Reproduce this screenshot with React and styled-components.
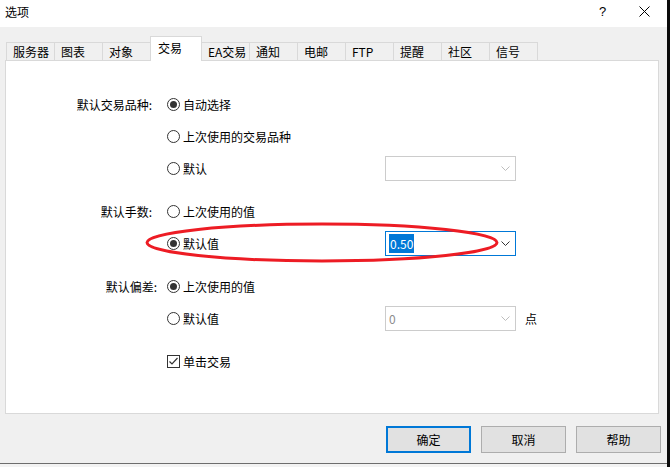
import React from "react";
import styled, { createGlobalStyle } from "styled-components";

const GlobalStyle = createGlobalStyle`
  html, body {
    margin: 0;
    padding: 0;
    background: #0b0b0b;
  }
  body {
    font-family: "Noto Sans CJK SC", "Noto Sans", sans-serif;
    font-size: 12px;
    color: #000;
  }
`;

const Screen = styled.div`
  display: flex;
  width: 670px;
  height: 467px;
  overflow: hidden;
`;

const Column = styled.div`
  display: flex;
  flex-direction: column;
  width: 667px;
`;

const Window = styled.div`
  height: 464px;
  box-sizing: border-box;
  background: #f0f0f0;
  border-bottom: 1px solid #6d6d6d;
  display: flex;
  flex-direction: column;
`;

const BelowStrip = styled.div`
  flex: 1;
  background: #f3f3f3;
`;

const TitleBar = styled.div`
  height: 27px;
  box-sizing: border-box;
  background: #fff;
  display: flex;
  align-items: flex-start;
  padding: 4px 17px 0 5px;
`;

const Title = styled.div`
  flex: 1;
  line-height: 16px;
`;

const HelpMark = styled.div`
  width: 10px;
  line-height: 16px;
  font-size: 13px;
  font-family: "Liberation Sans", sans-serif;
  margin-right: 30px;
`;

const CloseIcon = styled.svg`
  margin-top: 2px;
`;

const Body = styled.div`
  display: flex;
  flex-direction: column;
  padding: 9px 0 0 5px;
`;

const TabStrip = styled.div`
  display: flex;
  align-items: flex-end;
  height: 24px;
  margin-left: 1px;
  position: relative;
  z-index: 1;
`;

const Tab = styled.div`
  box-sizing: border-box;
  width: ${(p) => (p.$active ? "52px" : "49px")};
  height: ${(p) => (p.$active ? "25px" : "18px")};
  margin-bottom: ${(p) => (p.$active ? "-1px" : "0")};
  padding: ${(p) => (p.$active ? "2px 0 0 7px" : "0 0 0 6px")};
  line-height: 17px;
  background: ${(p) => (p.$active ? "#fff" : "#f0f0f0")};
  border: 1px solid #d9d9d9;
  border-bottom: none;
  margin-right: -1px;
  white-space: nowrap;
`;

const Panel = styled.div`
  position: relative;
  box-sizing: border-box;
  height: 354px;
  margin-right: 8px;
  background: #fff;
  border: 1px solid #d9d9d9;
  padding-top: 27px;
  display: flex;
  flex-direction: column;
  gap: 11px;
`;

const Group = styled.div`
  display: flex;
  flex-direction: column;
`;

const Row = styled.div`
  display: flex;
  align-items: center;
  height: 32px;
`;

const Label = styled.div`
  box-sizing: border-box;
  width: 161px;
  padding-right: ${(p) => 15 - (p.$shift || 0)}px;
  text-align: right;
  white-space: nowrap;
`;

const Choice = styled.label`
  display: flex;
  align-items: center;
  gap: 3px;
  width: 218px;
  white-space: nowrap;
`;

const RadioMark = styled.span`
  box-sizing: border-box;
  width: 13px;
  height: 13px;
  border-radius: 50%;
  border: 1px solid #333;
  background: #fff;
  display: flex;
  align-items: center;
  justify-content: center;

  &::after {
    content: "";
    width: 7px;
    height: 7px;
    border-radius: 50%;
    background: ${(p) => (p.$checked ? "#333" : "transparent")};
  }
`;

const CheckMark = styled.span`
  box-sizing: border-box;
  width: 13px;
  height: 13px;
  border: 1px solid #333;
  background: #fff;
  display: flex;
`;

const Combo = styled.div`
  box-sizing: border-box;
  width: 131px;
  height: 25px;
  display: flex;
  align-items: center;
  padding: 0 5px 0 3px;
  background: #fff;
  border: 1px solid ${(p) => (p.$focused ? "#0078d7" : "#cccccc")};
  color: ${(p) => (p.$disabled ? "#8c8c8c" : "#000")};
`;

const ComboValue = styled.div`
  flex: 1;
  line-height: 19px;
  display: flex;
`;

const Selected = styled.span`
  background: #0078d7;
  color: #fff;
  padding: 0 1px;
`;

const Unit = styled.span`
  margin-left: 9px;
`;

const Highlight = styled.svg`
  position: absolute;
  left: 137px;
  top: 160px;
  pointer-events: none;
`;

const Footer = styled.div`
  display: flex;
  justify-content: flex-end;
  gap: 10px;
  padding: 12px 6px 0 0;
`;

const Button = styled.button`
  box-sizing: border-box;
  width: 85px;
  height: 27px;
  padding: 0;
  font: inherit;
  color: #000;
  background: #e1e1e1;
  border: ${(p) => (p.$primary ? "2px solid #0078d7" : "1px solid #adadad")};
`;

const Sliver = styled.div`
  flex: 1;
  background: #0b0b0b;
`;

const tabs = ["服务器", "图表", "对象", "交易", "EA交易", "通知", "电邮", "FTP", "提醒", "社区", "信号"];

const Chevron = ({ color }) => (
  <svg width="9" height="5" viewBox="0 0 9 5">
    <path d="M0.5 0.5 L4.5 4.5 L8.5 0.5" fill="none" stroke={color} strokeWidth="1" />
  </svg>
);

const Radio = ({ checked, children }) => (
  <Choice>
    <RadioMark $checked={checked} />
    {children}
  </Choice>
);

export default function App() {
  return (
    <Screen>
      <GlobalStyle />
      <Column>
        <Window>
          <TitleBar>
            <Title>选项</Title>
            <HelpMark>?</HelpMark>
            <CloseIcon width="11" height="11" viewBox="0 0 11 11">
              <path d="M0.5 0.5 L10.5 10.5 M10.5 0.5 L0.5 10.5" stroke="#000" strokeWidth="1" />
            </CloseIcon>
          </TitleBar>
          <Body>
            <TabStrip>
              {tabs.map((t) => (
                <Tab key={t} $active={t === "交易"}>
                  {t}
                </Tab>
              ))}
            </TabStrip>
            <Panel>
              <Group>
                <Row>
                  <Label>默认交易品种:</Label>
                  <Radio checked>自动选择</Radio>
                </Row>
                <Row>
                  <Label />
                  <Radio>上次使用的交易品种</Radio>
                </Row>
                <Row>
                  <Label />
                  <Radio>默认</Radio>
                  <Combo $disabled>
                    <ComboValue />
                    <Chevron color="#bdbdbd" />
                  </Combo>
                </Row>
              </Group>
              <Group>
                <Row>
                  <Label>默认手数:</Label>
                  <Radio>上次使用的值</Radio>
                </Row>
                <Row>
                  <Label />
                  <Radio checked>默认值</Radio>
                  <Combo $focused>
                    <ComboValue>
                      <Selected>0.50</Selected>
                    </ComboValue>
                    <Chevron color="#333" />
                  </Combo>
                </Row>
              </Group>
              <Group>
                <Row>
                  <Label $shift={5}>默认偏差:</Label>
                  <Radio checked>上次使用的值</Radio>
                </Row>
                <Row>
                  <Label />
                  <Radio>默认值</Radio>
                  <Combo $disabled>
                    <ComboValue>0</ComboValue>
                    <Chevron color="#bdbdbd" />
                  </Combo>
                  <Unit>点</Unit>
                </Row>
              </Group>
              <Group>
                <Row>
                  <Label />
                  <Choice>
                    <CheckMark>
                      <svg width="11" height="11" viewBox="0 0 11 11">
                        <path d="M1.5 5.5 L4 8 L9.5 2" fill="none" stroke="#333" strokeWidth="1.2" />
                      </svg>
                    </CheckMark>
                    单击交易
                  </Choice>
                </Row>
              </Group>
              <Highlight width="360" height="43" viewBox="0 0 360 43">
                <ellipse cx="179" cy="21.5" rx="175" ry="18.5" fill="none" stroke="#ed1c24" strokeWidth="3" />
              </Highlight>
            </Panel>
            <Footer>
              <Button $primary>确定</Button>
              <Button>取消</Button>
              <Button>帮助</Button>
            </Footer>
          </Body>
        </Window>
        <BelowStrip />
      </Column>
      <Sliver />
    </Screen>
  );
}
